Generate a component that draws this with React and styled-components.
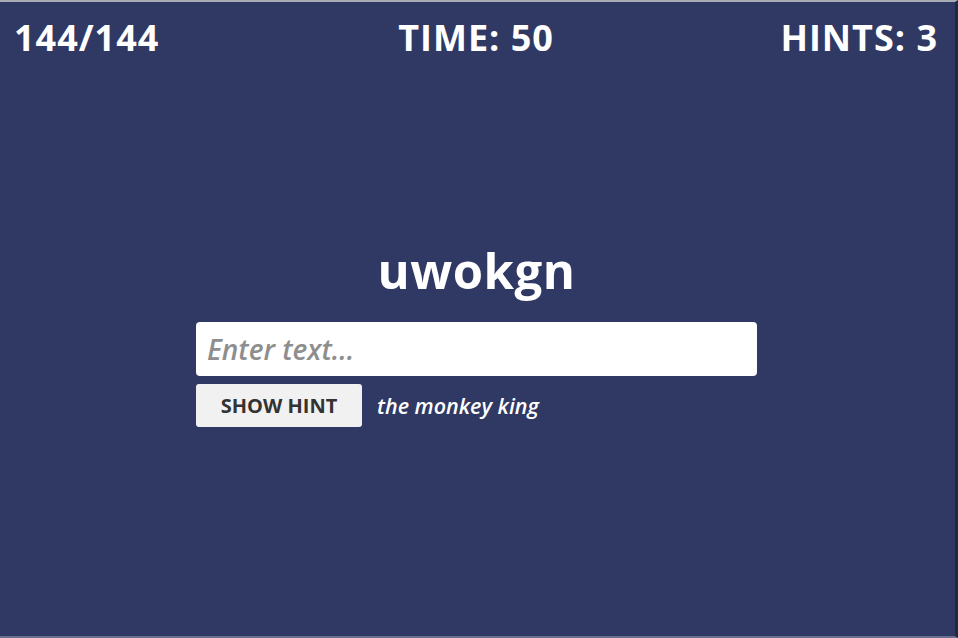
import React, { useState } from "react";
import styled, { createGlobalStyle } from "styled-components";

const Global = createGlobalStyle`
  html, body {
    margin: 0;
    padding: 0;
    background: #2f3963;
  }
  * { box-sizing: border-box; }
`;

const Page = styled.div`
  width: 958px;
  height: 638px;
  background: #2f3963;
  border-top: 2px solid #a9abb3;
  border-right: 3px solid #22283f;
  border-bottom: 2px solid #6a7090;
  display: flex;
  flex-direction: column;
  font-family: "Open Sans", "Liberation Sans", sans-serif;
  color: #fff;
  overflow: hidden;
`;

const TopBar = styled.div`
  display: flex;
  justify-content: space-between;
  align-items: center;
  padding: 12px 17px 0 14px;
`;

const Stat = styled.div`
  font-family: "Open Sans", sans-serif;
  font-weight: 700;
  font-size: 36px;
  letter-spacing: 1px;
  line-height: 48px;
  flex: 1;
  text-align: ${(p) => p.$align};
`;

const Center = styled.div`
  flex: 1;
  display: flex;
  flex-direction: column;
  align-items: center;
  padding-top: 178px;
  padding-right: 2px;
`;

const Word = styled.h1`
  margin: 0;
  font-family: "Open Sans", sans-serif;
  font-weight: 700;
  font-size: 49px;
  line-height: 60px;
  letter-spacing: 0.5px;
`;

const Form = styled.div`
  width: 561px;
  margin-top: 22px;
  display: flex;
  flex-direction: column;
  gap: 8px;
`;

const Input = styled.input`
  width: 100%;
  height: 54px;
  border: none;
  border-radius: 4px;
  background: #fff;
  padding: 0 11px;
  font-family: "Open Sans", sans-serif;
  font-size: 28px;
  font-style: italic;
  font-weight: 600;
  color: #333;
  outline: none;
  &::placeholder { color: #8e8e8e; }
`;

const HintRow = styled.div`
  display: flex;
  align-items: center;
  gap: 15px;
`;

const HintButton = styled.button`
  width: 166px;
  height: 43px;
  border: none;
  border-radius: 3px;
  background: #f1f1f1;
  color: #333;
  font-family: "Open Sans", sans-serif;
  font-weight: 700;
  font-size: 20px;
  cursor: pointer;
`;

const HintText = styled.span`
  font-family: "Open Sans", sans-serif;
  font-style: italic;
  font-weight: 600;
  font-size: 21.5px;
  color: #fff;
`;

export default function App() {
  const [value, setValue] = useState("");
  return (
    <>
      <Global />
      <Page>
        <TopBar>
          <Stat $align="left">144/144</Stat>
          <Stat $align="center">TIME: 50</Stat>
          <Stat $align="right">HINTS: 3</Stat>
        </TopBar>
        <Center>
          <Word>uwokgn</Word>
          <Form>
            <Input
              placeholder="Enter text..."
              value={value}
              onChange={(e) => setValue(e.target.value)}
            />
            <HintRow>
              <HintButton>SHOW HINT</HintButton>
              <HintText>the monkey king</HintText>
            </HintRow>
          </Form>
        </Center>
      </Page>
    </>
  );
}
